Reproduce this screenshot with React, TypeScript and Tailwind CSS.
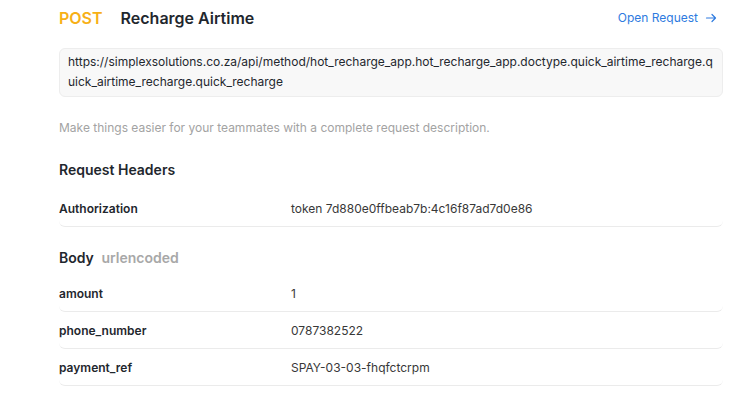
const headers = [{ key: 'Authorization', value: 'token 7d880e0ffbeab7b:4c16f87ad7d0e86' }];

const body = [
  { key: 'amount', value: '1' },
  { key: 'phone_number', value: '0787382522' },
  { key: 'payment_ref', value: 'SPAY-03-03-fhqfctcrpm' },
];

function Row({ k, v }: { k: string; v: string }) {
  return (
    <div className="flex items-center h-[37px] pt-px border-b border-[#ebebeb] rounded-md text-[12px]">
      <div className="w-[232px] shrink-0 font-semibold text-[#1f272e]">{k}</div>
      <div className="text-[#383838]">{v}</div>
    </div>
  );
}

export default function App() {
  return (
    <div className="bg-white min-h-[401px] font-['Inter',sans-serif]">
      <div className="w-[664px] ml-[59px]">
        {/* Title */}
        <div className="flex items-center justify-between h-9">
          <div className="flex items-center gap-[18px] text-[16px] font-semibold">
            <span className="text-[#f7b016]">POST</span>
            <span className="text-[#1f272e]">Recharge Airtime</span>
          </div>
          <a className="flex items-center gap-[7px] mr-[6px] text-[12px] text-[#2e7be0] cursor-pointer">
            Open Request
            <svg width="12" height="12" viewBox="0 0 12 12" fill="none" stroke="currentColor" strokeWidth="1.2" strokeLinecap="round" strokeLinejoin="round">
              <path d="M1.5 6h9M7 2.5 10.5 6 7 9.5" />
            </svg>
          </a>
        </div>

        {/* URL */}
        <div className="mt-3 bg-[#f8f8f8] border border-[#ededed] rounded-md px-[8px] pt-[3px] pb-[4px] text-[12px] leading-5 text-[#1f272e] break-all">
          https://simplexsolutions.co.za/api/method/hot_recharge_app.hot_recharge_app.doctype.quick_airtime_recharge.quick_airtime_recharge.quick_recharge
        </div>

        <p className="mt-[21px] text-[12px] leading-5 text-[#a3a3a3]">
          Make things easier for your teammates with a complete request description.
        </p>

        <h3 className="mt-5 text-[14px] leading-6 font-semibold text-[#1f272e]">Request Headers</h3>
        <div className="mt-2">
          {headers.map((h) => (
            <Row key={h.key} k={h.key} v={h.value} />
          ))}
        </div>

        <h3 className="mt-[19px] text-[14px] leading-6 font-semibold text-[#1f272e]">
          Body <span className="ml-1 text-[#a8a8a8]">urlencoded</span>
        </h3>
        <div className="mt-[5px]">
          {body.map((b) => (
            <Row key={b.key} k={b.key} v={b.value} />
          ))}
        </div>
      </div>
    </div>
  );
}
